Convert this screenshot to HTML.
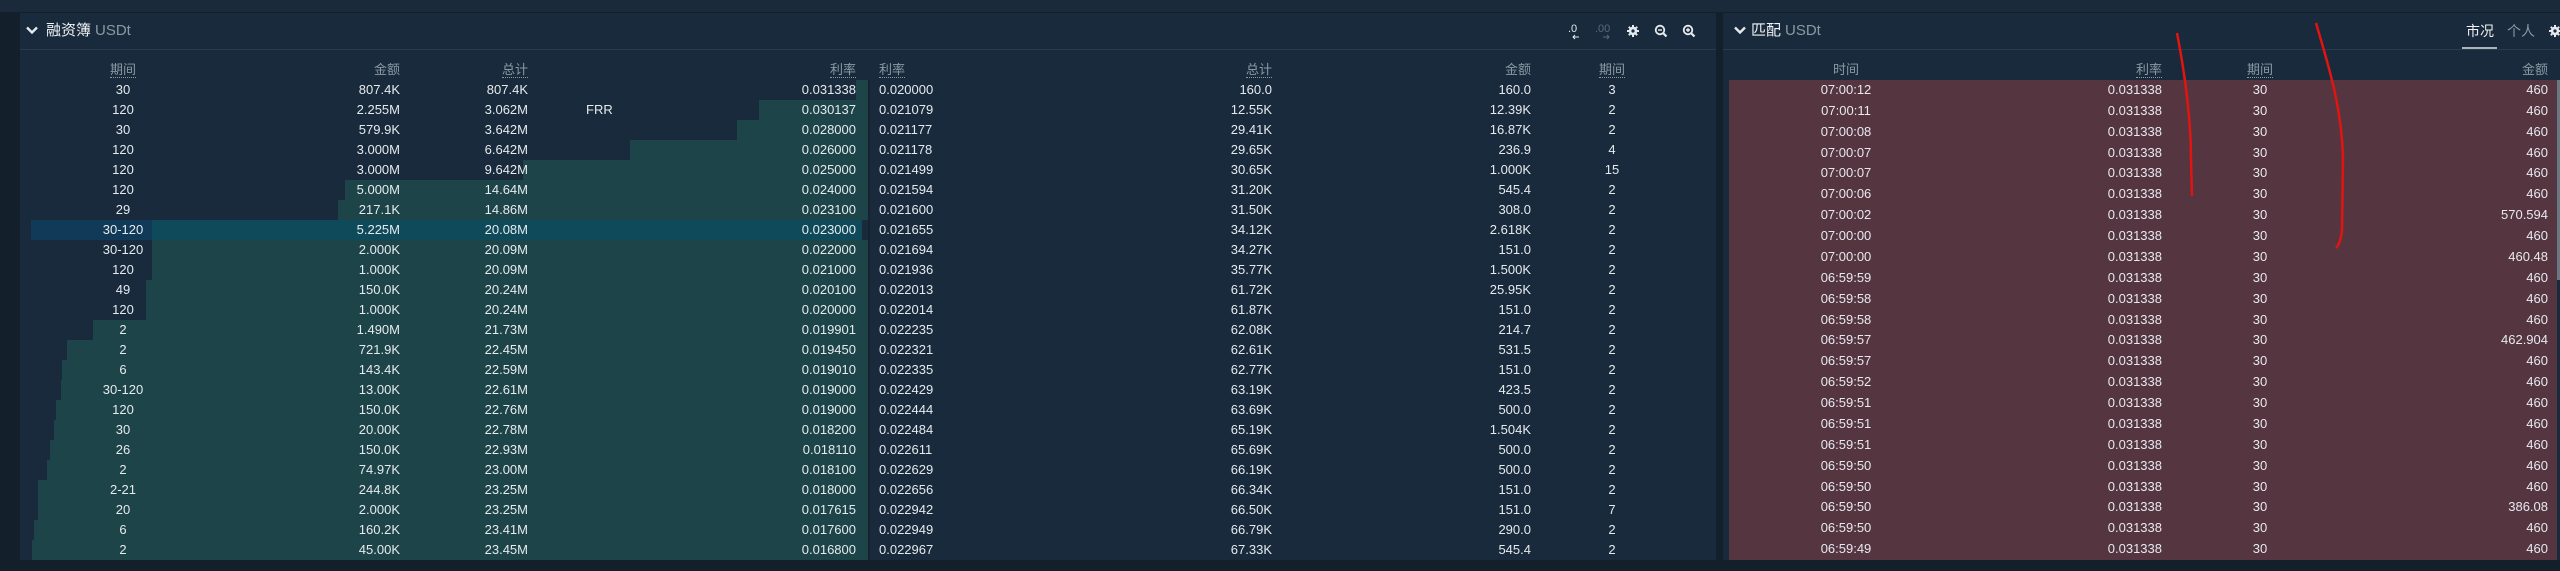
<!DOCTYPE html>
<html><head><meta charset="utf-8"><style>
*{margin:0;padding:0;box-sizing:border-box}
body{width:2560px;height:571px;overflow:hidden;background:#131f2a;font-family:"Liberation Sans","Noto Sans CJK SC",sans-serif;color:#e6eaee;font-size:13px;position:relative}
.abs{position:absolute}
.top{left:0;top:0;width:2560px;height:12px;background:#1a2a3a}
.pl{left:20px;top:13px;width:1696px;height:547px;background:#182a3b}
.pr{left:1723px;top:13px;width:837px;height:547px;background:#182a3b}
.hl{height:1px;background:#2a3b4b;top:49px}
.ttl{top:21px;font-size:15px;line-height:20px;color:#f0f2f4}
.ttl span{color:#8c99a5;margin-left:4px}
.chev{top:26px;width:12px;height:8px}
.hd{top:60px;line-height:20px;color:#8c99a5;border:0}
.hd u{text-decoration:none;border-bottom:1px dotted #8c99a5}
.r{position:absolute;left:0;width:2560px;height:20px;line-height:20px}
.r span{position:absolute;top:0;white-space:nowrap}
.b{position:absolute;top:0;height:20px;right:1692px;background:#1c4449}
.p{left:88px;width:70px;text-align:center}
.a{left:300px;width:100px;text-align:right}
.t{left:428px;width:100px;text-align:right}
.br{left:756px;width:100px;text-align:right}
.ar{left:879px}
.at{left:1172px;width:100px;text-align:right}
.aa{left:1431px;width:100px;text-align:right}
.ap{left:1582px;width:60px;text-align:center}
.pink{left:1729px;top:80px;width:828px;height:480px;background:#553540}
.q{position:absolute;left:0;width:2560px;height:20.87px;line-height:20.87px}
.q span{position:absolute;top:0}
.tm{left:1796px;width:100px;text-align:center}
.rt{left:2062px;width:100px;text-align:right}
.pd{left:2230px;width:60px;text-align:center}
.am{left:2448px;width:100px;text-align:right}
</style></head><body>
<div class="abs top"></div>
<div class="abs pl"></div>
<div class="abs pr"></div>
<div class="abs hl" style="left:20px;width:1696px"></div>
<div class="abs hl" style="left:1723px;width:837px"></div>
<svg class="abs chev" style="left:26px" viewBox="0 0 12 8"><path d="M1 1.5L6 6.5L11 1.5" stroke="#e6eaee" stroke-width="2.4" fill="none"/></svg>
<div class="abs ttl" style="left:46px">融资簿<span>USDt</span></div>
<svg class="abs chev" style="left:1734px" viewBox="0 0 12 8"><path d="M1 1.5L6 6.5L11 1.5" stroke="#e6eaee" stroke-width="2.4" fill="none"/></svg>
<div class="abs ttl" style="left:1751px">匹配<span>USDt</span></div>
<svg class="abs" style="left:1565px;top:20px" width="140" height="22" viewBox="0 0 140 22">
<text x="3" y="12" font-size="11" fill="#e6eaee" font-family="Liberation Sans">.0</text>
<path d="M14 17H8M10 15L8 17L10 19" stroke="#e6eaee" stroke-width="1" fill="none"/>
<text x="30" y="12" font-size="11" fill="#5b6976" font-family="Liberation Sans">.00</text>
<path d="M38 17H44M42 15L44 17L42 19" stroke="#5b6976" stroke-width="1" fill="none"/>
<g transform="translate(68,11)"><circle r="4.2" fill="#e6eaee"/><path d="M0-6V6M-6 0H6M-4.2-4.2L4.2 4.2M-4.2 4.2L4.2-4.2" stroke="#e6eaee" stroke-width="2"/><circle r="1.6" fill="#182a3b"/></g>
<g transform="translate(95,10)"><circle r="4.3" stroke="#e6eaee" stroke-width="1.8" fill="none"/><path d="M3 3L6.5 6.5" stroke="#e6eaee" stroke-width="2.2"/><path d="M-2 0H2" stroke="#e6eaee" stroke-width="1.4"/></g>
<g transform="translate(123,10)"><circle r="4.3" stroke="#e6eaee" stroke-width="1.8" fill="none"/><path d="M3 3L6.5 6.5" stroke="#e6eaee" stroke-width="2.2"/><path d="M-2 0H2M0-2V2" stroke="#e6eaee" stroke-width="1.4"/></g>
</svg>
<div class="abs" style="left:2466px;top:21px;font-size:14px;line-height:20px;color:#f0f2f4">市况</div>
<div class="abs" style="left:2462px;top:47px;width:35px;height:2px;background:#aab4bd"></div>
<div class="abs" style="left:2507px;top:21px;font-size:14px;line-height:20px;color:#8c99a5">个人</div>
<svg class="abs" style="left:2548px;top:24px" width="12" height="14" viewBox="0 0 12 14"><g transform="translate(7,7)"><circle r="4.2" fill="#e6eaee"/><path d="M0-6V6M-6 0H6M-4.2-4.2L4.2 4.2M-4.2 4.2L4.2-4.2" stroke="#e6eaee" stroke-width="2"/><circle r="1.6" fill="#182a3b"/></g></svg>
<div class="r hd" style="top:60px">
<span class="p"><u>期间</u></span><span class="a">金额</span><span class="t"><u>总计</u></span><span class="br"><u>利率</u></span><span class="ar"><u>利率</u></span><span class="at"><u>总计</u></span><span class="aa">金额</span><span class="ap"><u>期间</u></span>
<span class="tm" style="color:#8c99a5">时间</span><span class="rt"><u>利率</u></span><span class="pd"><u>期间</u></span><span class="am">金额</span>
</div>
<div class="abs" style="left:868px;top:80px;width:2px;height:480px;background:#14232f"></div>
<div class="r" style="top:80px"><i class="b" style="left:856px"></i><span class="p">30</span><span class="a">807.4K</span><span class="t">807.4K</span><span class="br">0.031338</span><span class="ar">0.020000</span><span class="at">160.0</span><span class="aa">160.0</span><span class="ap">3</span></div>
<div class="r" style="top:100px"><i class="b" style="left:759px"></i><span class="p">120</span><span class="a">2.255M</span><span class="t">3.062M</span><span style="left:586px">FRR</span><span class="br">0.030137</span><span class="ar">0.021079</span><span class="at">12.55K</span><span class="aa">12.39K</span><span class="ap">2</span></div>
<div class="r" style="top:120px"><i class="b" style="left:737px"></i><span class="p">30</span><span class="a">579.9K</span><span class="t">3.642M</span><span class="br">0.028000</span><span class="ar">0.021177</span><span class="at">29.41K</span><span class="aa">16.87K</span><span class="ap">2</span></div>
<div class="r" style="top:140px"><i class="b" style="left:630px"></i><span class="p">120</span><span class="a">3.000M</span><span class="t">6.642M</span><span class="br">0.026000</span><span class="ar">0.021178</span><span class="at">29.65K</span><span class="aa">236.9</span><span class="ap">4</span></div>
<div class="r" style="top:160px"><i class="b" style="left:523px"></i><span class="p">120</span><span class="a">3.000M</span><span class="t">9.642M</span><span class="br">0.025000</span><span class="ar">0.021499</span><span class="at">30.65K</span><span class="aa">1.000K</span><span class="ap">15</span></div>
<div class="r" style="top:180px"><i class="b" style="left:345px"></i><span class="p">120</span><span class="a">5.000M</span><span class="t">14.64M</span><span class="br">0.024000</span><span class="ar">0.021594</span><span class="at">31.20K</span><span class="aa">545.4</span><span class="ap">2</span></div>
<div class="r" style="top:200px"><i class="b" style="left:338px"></i><span class="p">29</span><span class="a">217.1K</span><span class="t">14.86M</span><span class="br">0.023100</span><span class="ar">0.021600</span><span class="at">31.50K</span><span class="aa">308.0</span><span class="ap">2</span></div>
<div class="r" style="top:220px"><i class="b" style="left:31px;width:121px;background:#103a58"></i><i class="b" style="left:152px;right:1698px;background:#0f4a5a"></i><span class="p">30-120</span><span class="a">5.225M</span><span class="t">20.08M</span><span class="br">0.023000</span><span class="ar">0.021655</span><span class="at">34.12K</span><span class="aa">2.618K</span><span class="ap">2</span></div>
<div class="r" style="top:240px"><i class="b" style="left:152px"></i><span class="p">30-120</span><span class="a">2.000K</span><span class="t">20.09M</span><span class="br">0.022000</span><span class="ar">0.021694</span><span class="at">34.27K</span><span class="aa">151.0</span><span class="ap">2</span></div>
<div class="r" style="top:260px"><i class="b" style="left:152px"></i><span class="p">120</span><span class="a">1.000K</span><span class="t">20.09M</span><span class="br">0.021000</span><span class="ar">0.021936</span><span class="at">35.77K</span><span class="aa">1.500K</span><span class="ap">2</span></div>
<div class="r" style="top:280px"><i class="b" style="left:146px"></i><span class="p">49</span><span class="a">150.0K</span><span class="t">20.24M</span><span class="br">0.020100</span><span class="ar">0.022013</span><span class="at">61.72K</span><span class="aa">25.95K</span><span class="ap">2</span></div>
<div class="r" style="top:300px"><i class="b" style="left:146px"></i><span class="p">120</span><span class="a">1.000K</span><span class="t">20.24M</span><span class="br">0.020000</span><span class="ar">0.022014</span><span class="at">61.87K</span><span class="aa">151.0</span><span class="ap">2</span></div>
<div class="r" style="top:320px"><i class="b" style="left:93px"></i><span class="p">2</span><span class="a">1.490M</span><span class="t">21.73M</span><span class="br">0.019901</span><span class="ar">0.022235</span><span class="at">62.08K</span><span class="aa">214.7</span><span class="ap">2</span></div>
<div class="r" style="top:340px"><i class="b" style="left:67px"></i><span class="p">2</span><span class="a">721.9K</span><span class="t">22.45M</span><span class="br">0.019450</span><span class="ar">0.022321</span><span class="at">62.61K</span><span class="aa">531.5</span><span class="ap">2</span></div>
<div class="r" style="top:360px"><i class="b" style="left:62px"></i><span class="p">6</span><span class="a">143.4K</span><span class="t">22.59M</span><span class="br">0.019010</span><span class="ar">0.022335</span><span class="at">62.77K</span><span class="aa">151.0</span><span class="ap">2</span></div>
<div class="r" style="top:380px"><i class="b" style="left:61px"></i><span class="p">30-120</span><span class="a">13.00K</span><span class="t">22.61M</span><span class="br">0.019000</span><span class="ar">0.022429</span><span class="at">63.19K</span><span class="aa">423.5</span><span class="ap">2</span></div>
<div class="r" style="top:400px"><i class="b" style="left:56px"></i><span class="p">120</span><span class="a">150.0K</span><span class="t">22.76M</span><span class="br">0.019000</span><span class="ar">0.022444</span><span class="at">63.69K</span><span class="aa">500.0</span><span class="ap">2</span></div>
<div class="r" style="top:420px"><i class="b" style="left:54px"></i><span class="p">30</span><span class="a">20.00K</span><span class="t">22.78M</span><span class="br">0.018200</span><span class="ar">0.022484</span><span class="at">65.19K</span><span class="aa">1.504K</span><span class="ap">2</span></div>
<div class="r" style="top:440px"><i class="b" style="left:50px"></i><span class="p">26</span><span class="a">150.0K</span><span class="t">22.93M</span><span class="br">0.018110</span><span class="ar">0.022611</span><span class="at">65.69K</span><span class="aa">500.0</span><span class="ap">2</span></div>
<div class="r" style="top:460px"><i class="b" style="left:47px"></i><span class="p">2</span><span class="a">74.97K</span><span class="t">23.00M</span><span class="br">0.018100</span><span class="ar">0.022629</span><span class="at">66.19K</span><span class="aa">500.0</span><span class="ap">2</span></div>
<div class="r" style="top:480px"><i class="b" style="left:38px"></i><span class="p">2-21</span><span class="a">244.8K</span><span class="t">23.25M</span><span class="br">0.018000</span><span class="ar">0.022656</span><span class="at">66.34K</span><span class="aa">151.0</span><span class="ap">2</span></div>
<div class="r" style="top:500px"><i class="b" style="left:38px"></i><span class="p">20</span><span class="a">2.000K</span><span class="t">23.25M</span><span class="br">0.017615</span><span class="ar">0.022942</span><span class="at">66.50K</span><span class="aa">151.0</span><span class="ap">7</span></div>
<div class="r" style="top:520px"><i class="b" style="left:34px"></i><span class="p">6</span><span class="a">160.2K</span><span class="t">23.41M</span><span class="br">0.017600</span><span class="ar">0.022949</span><span class="at">66.79K</span><span class="aa">290.0</span><span class="ap">2</span></div>
<div class="r" style="top:540px"><i class="b" style="left:32px"></i><span class="p">2</span><span class="a">45.00K</span><span class="t">23.45M</span><span class="br">0.016800</span><span class="ar">0.022967</span><span class="at">67.33K</span><span class="aa">545.4</span><span class="ap">2</span></div>
<div class="abs pink"></div>
<div class="abs" style="left:2557px;top:80px;width:3px;height:200px;background:#6a7884"></div>
<div class="q" style="top:80px"><span class="tm">07:00:12</span><span class="rt">0.031338</span><span class="pd">30</span><span class="am">460</span></div>
<div class="q" style="top:100.87px"><span class="tm">07:00:11</span><span class="rt">0.031338</span><span class="pd">30</span><span class="am">460</span></div>
<div class="q" style="top:121.74px"><span class="tm">07:00:08</span><span class="rt">0.031338</span><span class="pd">30</span><span class="am">460</span></div>
<div class="q" style="top:142.61px"><span class="tm">07:00:07</span><span class="rt">0.031338</span><span class="pd">30</span><span class="am">460</span></div>
<div class="q" style="top:163.48px"><span class="tm">07:00:07</span><span class="rt">0.031338</span><span class="pd">30</span><span class="am">460</span></div>
<div class="q" style="top:184.35px"><span class="tm">07:00:06</span><span class="rt">0.031338</span><span class="pd">30</span><span class="am">460</span></div>
<div class="q" style="top:205.22px"><span class="tm">07:00:02</span><span class="rt">0.031338</span><span class="pd">30</span><span class="am">570.594</span></div>
<div class="q" style="top:226.09px"><span class="tm">07:00:00</span><span class="rt">0.031338</span><span class="pd">30</span><span class="am">460</span></div>
<div class="q" style="top:246.96px"><span class="tm">07:00:00</span><span class="rt">0.031338</span><span class="pd">30</span><span class="am">460.48</span></div>
<div class="q" style="top:267.83px"><span class="tm">06:59:59</span><span class="rt">0.031338</span><span class="pd">30</span><span class="am">460</span></div>
<div class="q" style="top:288.7px"><span class="tm">06:59:58</span><span class="rt">0.031338</span><span class="pd">30</span><span class="am">460</span></div>
<div class="q" style="top:309.57px"><span class="tm">06:59:58</span><span class="rt">0.031338</span><span class="pd">30</span><span class="am">460</span></div>
<div class="q" style="top:330.44px"><span class="tm">06:59:57</span><span class="rt">0.031338</span><span class="pd">30</span><span class="am">462.904</span></div>
<div class="q" style="top:351.31px"><span class="tm">06:59:57</span><span class="rt">0.031338</span><span class="pd">30</span><span class="am">460</span></div>
<div class="q" style="top:372.18px"><span class="tm">06:59:52</span><span class="rt">0.031338</span><span class="pd">30</span><span class="am">460</span></div>
<div class="q" style="top:393.05px"><span class="tm">06:59:51</span><span class="rt">0.031338</span><span class="pd">30</span><span class="am">460</span></div>
<div class="q" style="top:413.92px"><span class="tm">06:59:51</span><span class="rt">0.031338</span><span class="pd">30</span><span class="am">460</span></div>
<div class="q" style="top:434.79px"><span class="tm">06:59:51</span><span class="rt">0.031338</span><span class="pd">30</span><span class="am">460</span></div>
<div class="q" style="top:455.66px"><span class="tm">06:59:50</span><span class="rt">0.031338</span><span class="pd">30</span><span class="am">460</span></div>
<div class="q" style="top:476.53px"><span class="tm">06:59:50</span><span class="rt">0.031338</span><span class="pd">30</span><span class="am">460</span></div>
<div class="q" style="top:497.4px"><span class="tm">06:59:50</span><span class="rt">0.031338</span><span class="pd">30</span><span class="am">386.08</span></div>
<div class="q" style="top:518.27px"><span class="tm">06:59:50</span><span class="rt">0.031338</span><span class="pd">30</span><span class="am">460</span></div>
<div class="q" style="top:539.14px"><span class="tm">06:59:49</span><span class="rt">0.031338</span><span class="pd">30</span><span class="am">460</span></div>
<svg class="abs" style="left:0;top:0" width="2560" height="571">
<path d="M2177 33C2186 80 2191 120 2191 160L2192 196" stroke="#e3140f" stroke-width="2.5" fill="none"/>
<path d="M2316 23C2330 70 2342 110 2343 160L2342 230C2341 240 2339 245 2336 248" stroke="#e3140f" stroke-width="2.5" fill="none"/>
</svg>
</body></html>
